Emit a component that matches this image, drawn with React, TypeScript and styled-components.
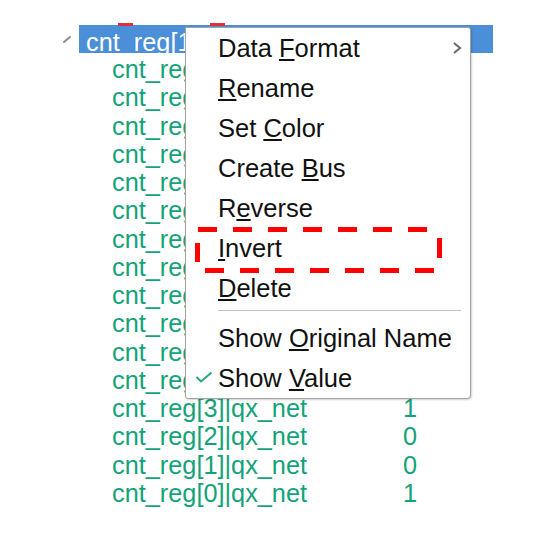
import styled, { createGlobalStyle } from "styled-components";

const GlobalStyle = createGlobalStyle`
  html, body {
    margin: 0;
    padding: 0;
    background: #ffffff;
  }
  body {
    font-family: "Liberation Sans", Arial, sans-serif;
  }
`;

const signals = [
  { name: "cnt_reg[15]|qx_net", value: "0" },
  { name: "cnt_reg[14]|qx_net", value: "0" },
  { name: "cnt_reg[13]|qx_net", value: "0" },
  { name: "cnt_reg[12]|qx_net", value: "0" },
  { name: "cnt_reg[11]|qx_net", value: "0" },
  { name: "cnt_reg[10]|qx_net", value: "0" },
  { name: "cnt_reg[9]|qx_net", value: "0" },
  { name: "cnt_reg[8]|qx_net", value: "0" },
  { name: "cnt_reg[7]|qx_net", value: "0" },
  { name: "cnt_reg[6]|qx_net", value: "0" },
  { name: "cnt_reg[5]|qx_net", value: "0" },
  { name: "cnt_reg[4]|qx_net", value: "0" },
  { name: "cnt_reg[3]|qx_net", value: "1" },
  { name: "cnt_reg[2]|qx_net", value: "0" },
  { name: "cnt_reg[1]|qx_net", value: "0" },
  { name: "cnt_reg[0]|qx_net", value: "1" },
];

// label split around the accelerator letter
const menuItems = [
  { pre: "Data ", key: "F", post: "ormat", sub: true },
  { pre: "", key: "R", post: "ename" },
  { pre: "Set ", key: "C", post: "olor" },
  { pre: "Create ", key: "B", post: "us" },
  { pre: "R", key: "e", post: "verse" },
  { pre: "", key: "I", post: "nvert" },
  { pre: "", key: "D", post: "elete" },
  { divider: true },
  { pre: "Show ", key: "O", post: "riginal Name" },
  { pre: "Show ", key: "V", post: "alue", checked: true },
];

const Canvas = styled.div`
  position: relative;
  width: 560px;
  height: 537px;
  overflow: hidden;
`;

const Tree = styled.div`
  display: flex;
  flex-direction: column;
  padding: 25px 0 0 62px;
  font-size: 25.3px;
`;

const BusRow = styled.div`
  display: flex;
  align-items: center;
  height: 28px;
  margin-bottom: 2px;
`;

const Toggle = styled.div`
  width: 17px;
  height: 28px;
  display: flex;
  align-items: center;
  justify-content: flex-start;
`;

const Highlight = styled.div`
  width: 414px;
  height: 28px;
  box-sizing: border-box;
  padding: 3px 0 0 7px;
  background: #4b8fd8;
  color: #ffffff;
  line-height: 28px;
  white-space: nowrap;
  overflow: hidden;
`;

const SignalRow = styled.div`
  display: grid;
  grid-template-columns: 291px auto;
  margin-left: 50px;
  height: 28.25px;
  line-height: 28.25px;
  color: #14a27a;
  white-space: nowrap;
`;

const Value = styled.span`
  padding-left: 0;
`;

const Menu = styled.div`
  position: absolute;
  left: 185px;
  top: 27px;
  width: 286px;
  box-sizing: border-box;
  background: #ffffff;
  border: 1px solid #a3a3a3;
  border-radius: 1px 3px 4px 3px;
  box-shadow: 1px 1px 2px rgba(0, 0, 0, 0.18);
  font-size: 25.5px;
  color: #111111;
  display: flex;
  flex-direction: column;
`;

const Item = styled.div`
  position: relative;
  height: 40px;
  line-height: 40px;
  padding-left: 32px;
  white-space: nowrap;
`;

const Key = styled.span`
  text-decoration: underline;
  text-decoration-thickness: 2px;
  text-underline-offset: 2px;
`;

const Divider = styled.div`
  height: 1px;
  background: #c4c4c4;
  margin: 2px 9px 7px 32px;
`;

const Chevron = styled.svg`
  position: absolute;
  right: 8px;
  top: 13px;
`;

const Check = styled.svg`
  position: absolute;
  left: 9px;
  top: 13px;
`;

const RedMark = styled.div<{ $left: number }>`
  position: absolute;
  top: 23px;
  left: ${(p) => p.$left}px;
  width: 15px;
  height: 3px;
  background: #e0303c;
`;

const Annotation = styled.svg`
  position: absolute;
  left: 0;
  top: 0;
  pointer-events: none;
`;

export default function App() {
  return (
    <Canvas>
      <GlobalStyle />
      <Tree>
        <BusRow>
          <Toggle>
            <svg width="10" height="10" viewBox="0 0 10 10">
              <path d="M2 8 L8 3" stroke="#8a8a8a" strokeWidth="2" strokeLinecap="round" />
            </svg>
          </Toggle>
          <Highlight>cnt_reg[15:0]</Highlight>
        </BusRow>
        {signals.map((s) => (
          <SignalRow key={s.name}>
            <span>{s.name}</span>
            <Value>{s.value}</Value>
          </SignalRow>
        ))}
      </Tree>

      <RedMark $left={118} />
      <RedMark $left={210} />

      <Menu>
        {menuItems.map((m, i) =>
          m.divider ? (
            <Divider key={i} />
          ) : (
            <Item key={i}>
              {m.checked && (
                <Check width="18" height="12" viewBox="0 0 18 12">
                  <path d="M1.5 6 L6 10.5 L16.5 1.5" fill="none" stroke="#2aa386" strokeWidth="2" />
                </Check>
              )}
              {m.pre}
              <Key>{m.key}</Key>
              {m.post}
              {m.sub && (
                <Chevron width="10" height="14" viewBox="0 0 10 14">
                  <path d="M2 2 L8 7 L2 12" fill="none" stroke="#6e6e6e" strokeWidth="2.2" />
                </Chevron>
              )}
            </Item>
          )
        )}
      </Menu>

      <Annotation width="560" height="537">
        <g stroke="#ff0000" strokeWidth="5" fill="none">
          <line x1="198" y1="229.5" x2="433" y2="229.5" strokeDasharray="19 16" />
          <line x1="205" y1="270.5" x2="440" y2="270.5" strokeDasharray="19 16" />
          <line x1="197.5" y1="243" x2="197.5" y2="262" />
          <line x1="439.5" y1="238" x2="439.5" y2="258" />
        </g>
      </Annotation>
    </Canvas>
  );
}
